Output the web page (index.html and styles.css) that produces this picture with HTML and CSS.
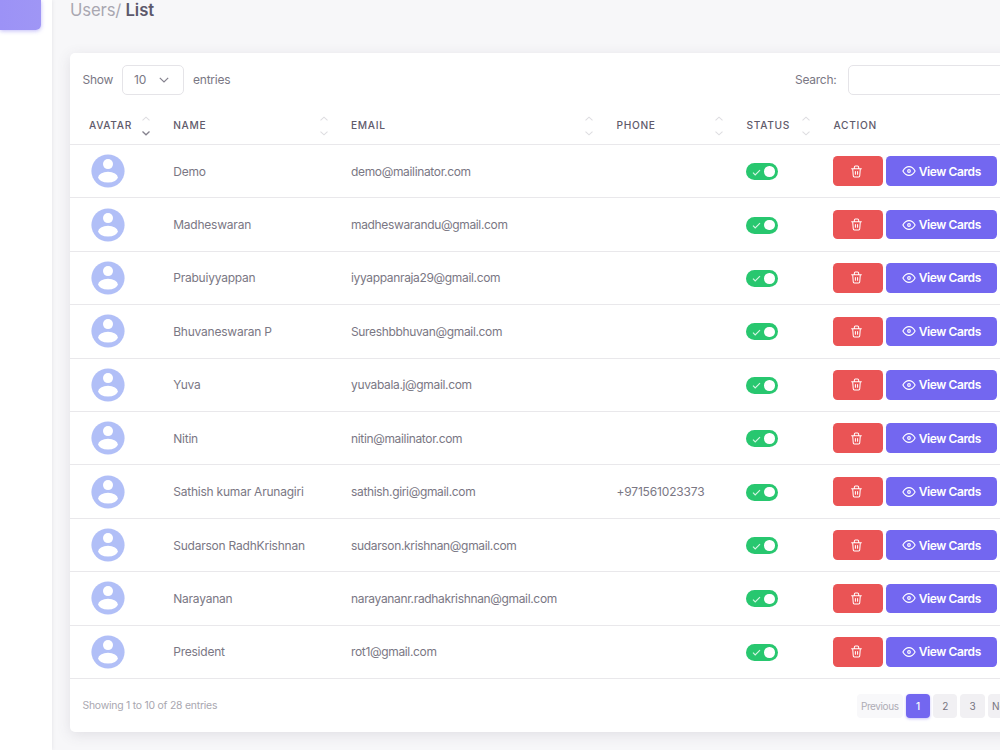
FILE: index.html
```html
<!DOCTYPE html>
<html lang="en">
<head>
    <meta charset="UTF-8">
    <meta name="viewport" content="width=device-width, initial-scale=1.0">
    <title>Users / List</title>
    <link rel="stylesheet" href="styles.css">
</head>
<body>
    <svg class="sprite" aria-hidden="true">
        <symbol id="icon-avatar" viewBox="0 0 34 34">
            <circle cx="17" cy="17" r="16.6" fill="#b1bff7"/>
            <circle cx="17" cy="10.1" r="5" fill="#fff"/>
            <ellipse cx="17" cy="23.2" rx="9.8" ry="5.4" fill="#fff"/>
        </symbol>
        <symbol id="icon-trash" viewBox="0 0 24 24">
            <path d="M3 7h18M5 7l1 13a2 2 0 0 0 2 2h8a2 2 0 0 0 2-2l1-13M8 7V4a2 2 0 0 1 2-2h4a2 2 0 0 1 2 2v3M10 12v5M14 12v5"/>
        </symbol>
        <symbol id="icon-eye" viewBox="0 0 24 24">
            <path d="M1.5 12s4-7.5 10.5-7.5S22.5 12 22.5 12s-4 7.5-10.5 7.5S1.5 12 1.5 12z"/>
            <circle cx="12" cy="12" r="2.3"/>
        </symbol>
        <symbol id="icon-sort" viewBox="0 0 10 20">
            <path d="M1.5 4.4L5 1.2l3.5 3.2"/>
            <path d="M1.5 15.6L5 18.8l3.5-3.2"/>
        </symbol>
    </svg>

    <div class="layout">
        <aside class="sidebar">
            <div class="menu-item active"></div>
        </aside>

        <main class="content">
            <h4 class="breadcrumb"><span>Users/</span> List</h4>

            <div class="card">
                <div class="toolbar">
                    <label class="length">
                        Show
                        <span class="select">10
                            <svg viewBox="0 0 10 6"><path d="M.8.8L5 5 9.2.8"/></svg>
                        </span>
                        entries
                    </label>
                    <label class="search">Search: <input type="search"></label>
                </div>

                <div class="row head">
                    <div>Avatar <svg class="sort desc" viewBox="0 0 10 20"><path d="M1.5 4.4L5 1.2l3.5 3.2"/><path class="down" d="M1.5 15.6L5 18.8l3.5-3.2"/></svg></div>
                    <div>Name <svg class="sort"><use href="#icon-sort"/></svg></div>
                    <div>Email <svg class="sort"><use href="#icon-sort"/></svg></div>
                    <div>Phone <svg class="sort"><use href="#icon-sort"/></svg></div>
                    <div>Status <svg class="sort"><use href="#icon-sort"/></svg></div>
                    <div>Action</div>
                </div>
                <div id="user-rows"></div>

                <div class="footer">
                    <div class="info">Showing 1 to 10 of 28 entries</div>
                    <div class="pagination">
                        <a class="page disabled">Previous</a>
                        <a class="page active">1</a>
                        <a class="page">2</a>
                        <a class="page">3</a>
                        <a class="page next">Next</a>
                    </div>
                </div>
            </div>
        </main>
    </div>

    <script>
        const users = [
            { name: 'Demo', email: 'demo@mailinator.com', phone: '' },
            { name: 'Madheswaran', email: 'madheswarandu@gmail.com', phone: '' },
            { name: 'Prabuiyyappan', email: 'iyyappanraja29@gmail.com', phone: '' },
            { name: 'Bhuvaneswaran P', email: 'Sureshbbhuvan@gmail.com', phone: '' },
            { name: 'Yuva', email: 'yuvabala.j@gmail.com', phone: '' },
            { name: 'Nitin', email: 'nitin@mailinator.com', phone: '' },
            { name: 'Sathish kumar Arunagiri', email: 'sathish.giri@gmail.com', phone: '+971561023373' },
            { name: 'Sudarson RadhKrishnan', email: 'sudarson.krishnan@gmail.com', phone: '' },
            { name: 'Narayanan', email: 'narayananr.radhakrishnan@gmail.com', phone: '' },
            { name: 'President', email: 'rot1@gmail.com', phone: '' }
        ];

        // Build one table row per user
        document.getElementById('user-rows').innerHTML = users.map(user => `
            <div class="row">
                <div><svg class="avatar"><use href="#icon-avatar"/></svg></div>
                <div class="name">${user.name}</div>
                <div class="email">${user.email}</div>
                <div class="phone">${user.phone}</div>
                <div>
                    <span class="switch">
                        <svg viewBox="0 0 10 8"><path d="M1 4.2l2.5 2.5L9 1.2"/></svg>
                        <i></i>
                    </span>
                </div>
                <div class="actions">
                    <button class="btn danger"><svg class="trash"><use href="#icon-trash"/></svg></button>
                    <button class="btn primary"><svg class="eye"><use href="#icon-eye"/></svg><span>View Cards</span></button>
                </div>
            </div>
        `).join('');
    </script>
</body>
</html>
```
FILE: styles.css
```css
* {
    box-sizing: border-box;
}
body {
    margin: 0;
    height: 750px;
    overflow: hidden;
    background-color: #f7f7f9;
    color: #7a7784;
    font-family: Inter, "Liberation Sans", sans-serif;
    font-size: 12px;
}
.sprite {
    display: none;
}
.layout {
    display: flex;
    width: 100%;
    height: 750px;
    overflow: hidden;
}
.sidebar {
    flex: none;
    width: 51.5px;
    background-color: #fff;
    box-shadow: 0 0 4px rgba(75, 70, 92, 0.12);
}
.menu-item.active {
    width: 41px;
    height: 29.5px;
    border-radius: 0 0 5px 0;
    background: linear-gradient(90deg, #9c92f6, #9f96f5);
    box-shadow: 0 1px 4px rgba(115, 103, 240, 0.45);
}
.content {
    flex: none;
    width: 1048.5px;
    padding-left: 18.5px;
}
.breadcrumb {
    margin: 0;
    height: 52.5px;
    color: #5d596c;
    font-size: 16.7px;
    font-weight: 600;
    line-height: 21px;
}
.breadcrumb span {
    color: #a9a7b1;
    font-weight: 400;
    letter-spacing: -0.15px;
}
.card {
    height: 679px;
    border-radius: 5px;
    background-color: #fff;
    box-shadow: 0 3px 14px rgba(75, 70, 92, 0.13);
}
.toolbar {
    display: flex;
    height: 54px;
    padding-left: 12.5px;
    align-items: center;
}
.length {
    display: flex;
    align-items: center;
    width: 712.5px;
    gap: 9px;
    letter-spacing: -0.25px;
}
.select {
    display: flex;
    align-items: center;
    justify-content: space-between;
    width: 62px;
    height: 30px;
    padding: 0 14px 0 11px;
    border: 1px solid #e5e4e8;
    border-radius: 5px;
}
.select svg {
    width: 10px;
    height: 6px;
}
.select path {
    fill: none;
    stroke: #85828e;
    stroke-width: 1.2;
}
.search {
    display: flex;
    align-items: center;
    gap: 11.5px;
    letter-spacing: -0.25px;
}
.search input {
    width: 190px;
    height: 30px;
    border: 1px solid #e5e4e8;
    border-radius: 5px;
    outline: none;
}
.row {
    display: grid;
    grid-template-columns: 84.2px 177.8px 265.5px 130px 87px 1fr;
    height: 53.43px;
    align-items: center;
    border-bottom: 1px solid #e9e8eb;
}
.row > div {
    display: flex;
    align-items: center;
    padding-left: 19px;
}
.row .name {
    letter-spacing: -0.22px;
}
.row .email {
    letter-spacing: -0.34px;
}
.row .phone {
    letter-spacing: -0.17px;
}
.row.head {
    height: 38.4px;
    color: #5f5b6b;
    font-size: 10.2px;
    font-weight: 500;
    letter-spacing: 0.68px;
    text-transform: uppercase;
}
.head > div {
    justify-content: space-between;
    padding-right: 3px;
}
.sort {
    width: 10px;
    height: 20px;
    margin-top: 1.5px;
    fill: none;
    stroke: #dedde1;
    stroke-width: 1.1;
}
.sort.desc .down {
    stroke: #85828e;
    stroke-width: 1.3;
}
.avatar {
    width: 34px;
    height: 34px;
    margin-left: 2.4px;
}
.switch {
    display: flex;
    align-items: center;
    justify-content: space-between;
    width: 31.5px;
    height: 17px;
    margin-top: 1px;
    padding: 0 3px 0 6px;
    border-radius: 9px;
    background-color: #28c76f;
}
.switch svg {
    width: 9px;
    height: 7px;
    margin-top: 1px;
    fill: none;
    stroke: #d5f5e3;
    stroke-width: 1.3;
}
.switch i {
    width: 10.5px;
    height: 10.5px;
    border-radius: 50%;
    background-color: #fff;
}
.actions {
    gap: 2.5px;
}
.btn {
    display: flex;
    align-items: center;
    justify-content: center;
    height: 29.5px;
    padding: 0;
    border: 0;
    border-radius: 4.5px;
    color: #fff;
    font: 600 12px Inter, "Liberation Sans", sans-serif;
    letter-spacing: -0.4px;
}
.btn svg {
    fill: none;
    stroke: #fff;
    stroke-linecap: round;
    stroke-linejoin: round;
    stroke-width: 1.9;
}
.btn.danger {
    width: 50px;
    padding-right: 3px;
    background-color: #ea5455;
}
.btn.primary {
    width: 111.5px;
    padding-right: 1px;
    gap: 3px;
    background-color: #7367f0;
}
.trash {
    width: 13px;
    height: 13px;
}
.eye {
    width: 14px;
    height: 14px;
}
.footer {
    display: flex;
    align-items: center;
    height: 53px;
    padding-left: 12.5px;
}
.info {
    width: 774px;
    color: #a9a7b0;
    font-size: 10.4px;
    letter-spacing: -0.22px;
}
.pagination {
    display: flex;
    gap: 3px;
}
.page {
    display: flex;
    align-items: center;
    justify-content: center;
    width: 24.2px;
    height: 24px;
    border-radius: 4px;
    background-color: #f1f0f3;
    color: #77747f;
    font-size: 10px;
}
.page.disabled {
    width: 46.5px;
    background-color: #f8f8fa;
    color: #aeacb5;
    letter-spacing: -0.4px;
}
.page.active {
    background-color: #7367f0;
    color: #fff;
    font-weight: 500;
    box-shadow: 0 1px 3px rgba(115, 103, 240, 0.4);
}
.page.next {
    justify-content: flex-start;
    width: 34px;
    padding-left: 4.5px;
}
```
